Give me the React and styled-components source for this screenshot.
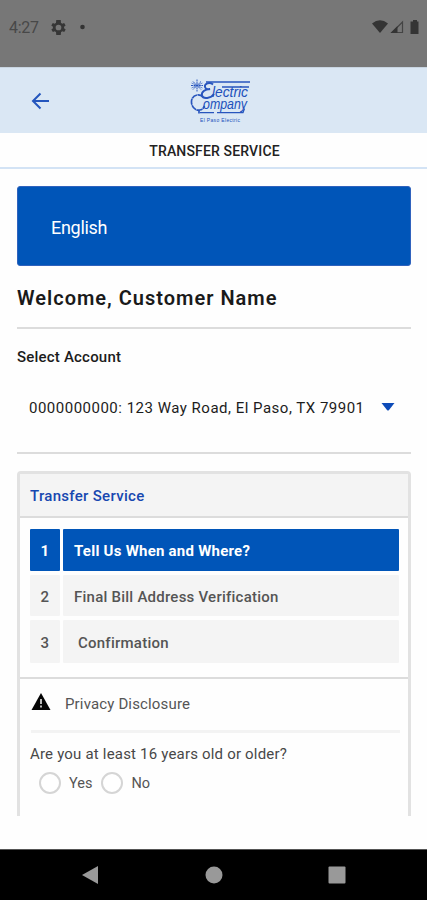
import React, { useState } from 'react'
import styled, { createGlobalStyle } from 'styled-components'

const blue = '#0055b8'
const linkBlue = '#1747b0'
const border = '#dcdcdc'

const GlobalStyle = createGlobalStyle`
  * {
    box-sizing: border-box;
  }
  body {
    margin: 0;
    background: white;
    font-family: Roboto, sans-serif;
  }
`

const Screen = styled.div`
  width: 427px;
  height: 900px;
  display: flex;
  flex-direction: column;
  overflow: hidden;
  background: #fefefe;
  white-space: nowrap;
`

const StatusBar = styled.div`
  height: 67px;
  flex: none;
  display: flex;
  align-items: center;
  justify-content: space-between;
  padding: 0 7px 13px 9px;
  background: #777777;
  color: #484848;
`

const StatusGroup = styled.div`
  display: flex;
  align-items: center;
  gap: ${({ $gap }) => $gap}px;
`

const Clock = styled.span`
  width: 30px;
  padding-top: 1px;
  font-size: 16px;
  letter-spacing: -0.3px;
`

const Header = styled.header`
  height: 66px;
  flex: none;
  display: flex;
  align-items: center;
  gap: 138px;
  padding: 0 30px;
  border-top: 1px solid #c9d5e1;
  background: #dae7f4;
`

const BackButton = styled.button`
  width: 20px;
  height: 20px;
  padding: 0;
  border: 0;
  background: none;
`

const TitleBar = styled.div`
  height: 36px;
  flex: none;
  display: flex;
  align-items: center;
  justify-content: center;
  padding: 2px 0 0 2px;
  border-bottom: 2px solid #d3e3f5;
  color: #222;
  font-size: 14px;
  font-weight: 500;
  letter-spacing: 0.15px;
`

const Content = styled.main`
  flex: 1;
  display: flex;
  flex-direction: column;
  padding: 17px 16px 33px 17px;
`

const Language = styled.div`
  height: 80px;
  display: flex;
  align-items: center;
  padding: 2px 33px 0;
  border: 1px solid #2f62bd;
  border-radius: 3px;
  background: ${blue};
  color: white;
  font-size: 18px;
  letter-spacing: -0.3px;
`

const Welcome = styled.h1`
  height: 63px;
  margin: 0;
  border-bottom: 2px solid ${border};
  color: #1a1a1a;
  font-size: 20px;
  font-weight: 600;
  line-height: 65px;
  letter-spacing: 1px;
`

const AccountSection = styled.section`
  height: 125px;
  border-bottom: 2px solid ${border};
`

const Label = styled.div`
  height: 57px;
  color: #1c1c1c;
  font-size: 15px;
  font-weight: 500;
  line-height: 57px;
  letter-spacing: 0.2px;
`

const Select = styled.div`
  height: 44px;
  display: flex;
  align-items: center;
  justify-content: space-between;
  padding: 0 16px 0 12px;
  color: #1c1c1c;
  font-size: 15px;
  letter-spacing: 0.5px;

  svg {
    margin-bottom: 2px;
  }
`

const Card = styled.section`
  flex: 1;
  margin-top: 17px;
  border: 3px solid #e2e2e2;
  border-bottom: 0;
  border-radius: 4px 4px 0 0;
`

const CardTitle = styled.h2`
  height: 44px;
  margin: 0;
  padding: 0 10px;
  border-bottom: 2px solid ${border};
  background: #f4f4f4;
  color: ${linkBlue};
  font-size: 15px;
  font-weight: 500;
  line-height: 44px;
  letter-spacing: 0.3px;
`

const Steps = styled.div`
  height: 161px;
  display: grid;
  grid-template-rows: 42px 41px 43px;
  gap: 4px;
  padding: 11px 9px 0 10px;
  border-bottom: 2px solid ${border};
`

const Step = styled.div`
  display: grid;
  grid-template-columns: 30px 1fr;
  gap: 3px;
  color: ${({ $active }) => ($active ? 'white' : '#555')};
  font-size: 15px;
  font-weight: ${({ $active }) => ($active ? 700 : 500)};
  letter-spacing: 0.24px;
`

const StepCell = styled.div`
  display: flex;
  align-items: center;
  justify-content: ${({ $number }) => ($number ? 'center' : 'flex-start')};
  padding-top: 2px;
  padding-left: ${({ $indent }) => $indent || 0}px;
  border-radius: 1px;
  background: ${({ $active }) => ($active ? blue : '#f4f4f4')};
`

const Privacy = styled.div`
  height: 54px;
  display: flex;
  align-items: center;
  gap: 14px;
  margin: 0 8px 0 11px;
  padding-bottom: 2px;
  border-bottom: 3px solid #f3f3f3;
  color: #555;
  font-size: 15px;
  line-height: 18px;
  letter-spacing: 0.15px;

  svg {
    margin-bottom: 4px;
  }
`

const Question = styled.div`
  height: 38px;
  padding-left: 10px;
  color: #484848;
  font-size: 15px;
  line-height: 43px;
  letter-spacing: 0.19px;
`

const Answers = styled.div`
  display: flex;
  gap: 9px;
  padding: 1px 0 0 19px;
`

const Answer = styled.label`
  display: flex;
  align-items: center;
  gap: 8px;
  color: #555;
  font-size: 14.5px;
`

const Radio = styled.input`
  appearance: none;
  width: 22px;
  height: 22px;
  margin: 0;
  border: 2px solid #d5d5d5;
  border-radius: 50%;
  background: white;

  &:checked {
    border: 6px solid ${blue};
  }
`

const NavBar = styled.nav`
  height: 51px;
  flex: none;
  display: grid;
  grid-template-columns: repeat(3, 123px);
  justify-content: center;
  justify-items: center;
  align-items: center;
  border-top: 1px solid #555;
  background: black;
`

const steps = [
  { name: 'Tell Us When and Where?', indent: 11 },
  { name: 'Final Bill Address Verification', indent: 11 },
  { name: 'Confirmation', indent: 15 },
]

const Logo = () => (
  <svg width="66" height="48" viewBox="188 77 66 48" fill="none" stroke="#2855bd">
    {/* flower burst */}
    <path d="M197 79.500v12M191 85.500h12M193 81.500l8 8M201 81.500l-8 8" strokeWidth="1" strokeDasharray="2 .6" />
    <path d="M191.500 83l11 5M191.500 88l11-5" strokeWidth=".6" />
    {/* rules */}
    <path d="M206 82h44M222 87h27" strokeWidth="1.400" />
    <path d="M200 112.600h14M217 112.600h26l1.500-4" strokeWidth="1.300" />
    {/* swashed capitals */}
    <path d="M213 84.500c-3-3-9-1-8 2.500.5 2 3 2.500 5 2-5 0-9 3-8 6.500 1 4 9 3 12-1.500" strokeWidth="1.900" />
    <path d="M203 97c-4-4-11-2-11.500 4-.5 6 4 10 8 9 3 0 4-2 5-4M199 109.500v4" strokeWidth="1.700" strokeDasharray="6 .5" />
    <g stroke="none" fill="#2050bb" fontFamily="Liberation Sans, sans-serif" fontStyle="italic">
      <text x="212" y="97" fontSize="14" textLength="36" lengthAdjust="spacingAndGlyphs">lectric</text>
      <text x="203" y="108.500" fontSize="14" textLength="44" lengthAdjust="spacingAndGlyphs">ompany</text>
      <text x="200" y="121.500" fontSize="5" fontStyle="normal" textLength="40">El Paso Electric</text>
    </g>
  </svg>
)

const StepRow = ({ number, name, indent, active }) => (
  <Step $active={active}>
    <StepCell $number $active={active}>{number}</StepCell>
    <StepCell $active={active} $indent={indent}>{name}</StepCell>
  </Step>
)

export default function App() {
  const [answer, setAnswer] = useState(null)

  return (
    <>
      <GlobalStyle />
      <Screen>
        <StatusBar>
          <StatusGroup $gap={12}>
            <Clock>4:27</Clock>
            <svg width="15" height="15" viewBox="2 2 20 20" fill="#363636">
              <path fillRule="evenodd" d="M19.4 13a7.500 7.500 0 0 0 0-2l2.100-1.600-2-3.500-2.500 1a7.700 7.700 0 0 0-1.700-1L15 2h-6l-.4 3.900a7.700 7.700 0 0 0-1.700 1l-2.500-1-2 3.500L4.600 11a7.500 7.500 0 0 0 0 2l-2.100 1.600 2 3.500 2.500-1a7.700 7.700 0 0 0 1.700 1L9 22h6l.4-3.900a7.700 7.700 0 0 0 1.700-1l2.500 1 2-3.500zM12 15.800a3.800 3.800 0 1 1 0-7.600 3.800 3.800 0 0 1 0 7.600z" />
            </svg>
            <svg width="10" height="6" viewBox="0 0 10 6">
              <circle cx="4.500" cy="3" r="2.300" fill="#333" />
            </svg>
          </StatusGroup>
          <StatusGroup $gap={0}>
            <svg width="48" height="14" viewBox="0 0 48 14" fill="#343434">
              <path d="M0 3.500Q8-3 16 3.500L8 13z" />
              <path d="M30.500 2v10.500H20z" fill="none" stroke="#444" strokeWidth="1.200" />
              <path d="M18.500 13l7-7v7z" />
              <path d="M39 1.500h2V0h4v1.500h1.500V14H38.500V1.500z" />
            </svg>
          </StatusGroup>
        </StatusBar>

        <Header>
          <BackButton aria-label="Back">
            <svg width="20" height="20" viewBox="0 0 20 20" fill="none" stroke="#2456bd" strokeWidth="2">
              <path d="M19 10H3M10.500 2.500L3 10l7.500 7.500" />
            </svg>
          </BackButton>
          <Logo />
        </Header>
        <TitleBar>TRANSFER SERVICE</TitleBar>

        <Content>
          <Language>English</Language>
          <Welcome>Welcome, Customer Name</Welcome>
          <AccountSection>
            <Label>Select Account</Label>
            <Select>
              <span>0000000000: 123 Way Road, El Paso, TX 79901</span>
              <svg width="14" height="8" viewBox="0 0 14 8">
                <path d="M.5 0h13L8 7q-1 1-2 0z" fill="#0d4bb8" />
              </svg>
            </Select>
          </AccountSection>

          <Card>
            <CardTitle>Transfer Service</CardTitle>
            <Steps>
              {steps.map((step, i) => (
                <StepRow key={step.name} number={i + 1} active={i === 0} {...step} />
              ))}
            </Steps>
            <Privacy>
              <svg width="20" height="18" viewBox="0 0 20 18">
                <path d="M10 0l9.500 17H.5z" fill="#050505" />
                <path d="M10 6v5M10 12.500v2" stroke="#bbb" strokeWidth="2" />
              </svg>
              Privacy Disclosure
            </Privacy>
            <Question>Are you at least 16 years old or older?</Question>
            <Answers>
              {['Yes', 'No'].map((option) => (
                <Answer key={option}>
                  <Radio
                    type="radio"
                    name="age"
                    checked={answer === option}
                    onChange={() => setAnswer(option)}
                  />
                  {option}
                </Answer>
              ))}
            </Answers>
          </Card>
        </Content>

        <NavBar>
          <svg width="18" height="18" viewBox="0 0 18 18" fill="#999">
            <path d="M16 0v18L0 9z" />
          </svg>
          <svg width="18" height="18" viewBox="0 0 18 18" fill="#999">
            <circle cx="9" cy="9" r="8.500" />
          </svg>
          <svg width="18" height="18" viewBox="0 0 18 18" fill="#999">
            <rect x=".5" y=".5" width="17" height="17" rx="1" />
          </svg>
        </NavBar>
      </Screen>
    </>
  )
}
